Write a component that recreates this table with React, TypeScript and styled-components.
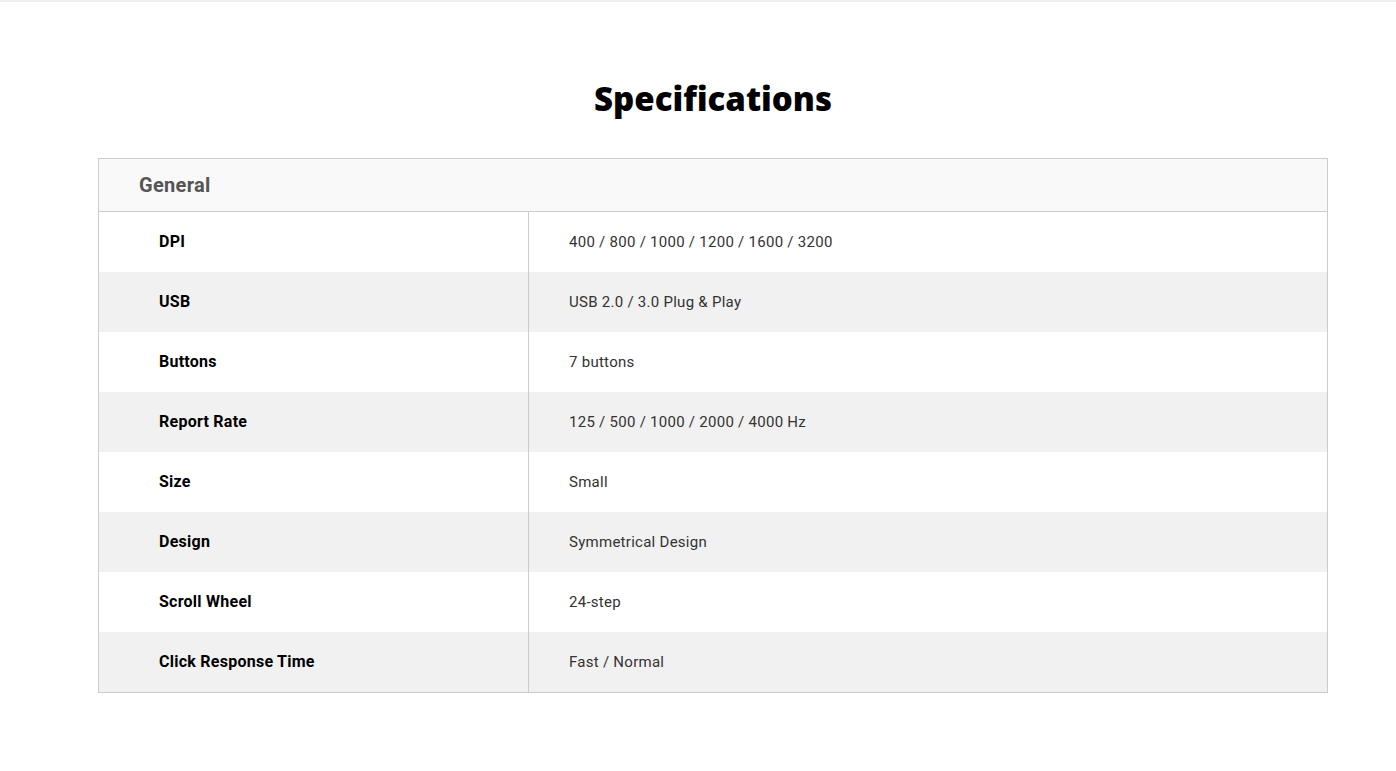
import styled, { createGlobalStyle } from "styled-components";

const GlobalStyle = createGlobalStyle`
  html, body {
    margin: 0;
    padding: 0;
    background: #ffffff;
  }
  body {
    font-family: Roboto, "Liberation Sans", Arial, sans-serif;
    color: #333333;
  }
`;

const TopEdge = styled.div`
  height: 2px;
  background: #eeeeee;
`;

const Section = styled.section`
  padding: 79px 68px 0 98px;
`;

const Title = styled.h2`
  margin: 0 0 41px;
  text-align: center;
  font-family: "Open Sans", "Liberation Sans", sans-serif;
  font-size: 33px;
  font-weight: 800;
  line-height: 36px;
  color: #000000;
`;

const Table = styled.div`
  border: 1px solid #cccccc;
`;

const GroupHeader = styled.div`
  height: 52px;
  display: flex;
  align-items: center;
  padding-left: 40px;
  background: #f9f9f9;
  border-bottom: 1px solid #cccccc;
  font-size: 20px;
  font-weight: 700;
  letter-spacing: 0.3px;
  color: #555555;
`;

const Row = styled.div<{ $shade: boolean }>`
  display: grid;
  grid-template-columns: 430px 1fr;
  height: 60px;
  background: ${({ $shade }) => ($shade ? "#f1f1f1" : "#ffffff")};
`;

const Key = styled.div`
  display: flex;
  align-items: center;
  padding: 0 0 2px 60px;
  border-right: 1px solid #cccccc;
  font-size: 16px;
  font-weight: 700;
  letter-spacing: 0.25px;
  color: #000000;
`;

const Value = styled.div`
  display: flex;
  align-items: center;
  padding-left: 40px;
  font-size: 15px;
  letter-spacing: 0.27px;
  color: #333333;
`;

const specs: [string, string][] = [
  ["DPI", "400 / 800 / 1000 / 1200 / 1600 / 3200"],
  ["USB", "USB 2.0 / 3.0 Plug & Play"],
  ["Buttons", "7 buttons"],
  ["Report Rate", "125 / 500 / 1000 / 2000 / 4000 Hz"],
  ["Size", "Small"],
  ["Design", "Symmetrical Design"],
  ["Scroll Wheel", "24-step"],
  ["Click Response Time", "Fast / Normal"],
];

const App = () => (
  <>
    <GlobalStyle />
    <TopEdge />
    <Section>
      <Title>Specifications</Title>
      <Table>
        <GroupHeader>General</GroupHeader>
        {specs.map(([key, value], i) => (
          <Row key={key} $shade={i % 2 === 1}>
            <Key>{key}</Key>
            <Value>{value}</Value>
          </Row>
        ))}
      </Table>
    </Section>
  </>
);

export default App;
